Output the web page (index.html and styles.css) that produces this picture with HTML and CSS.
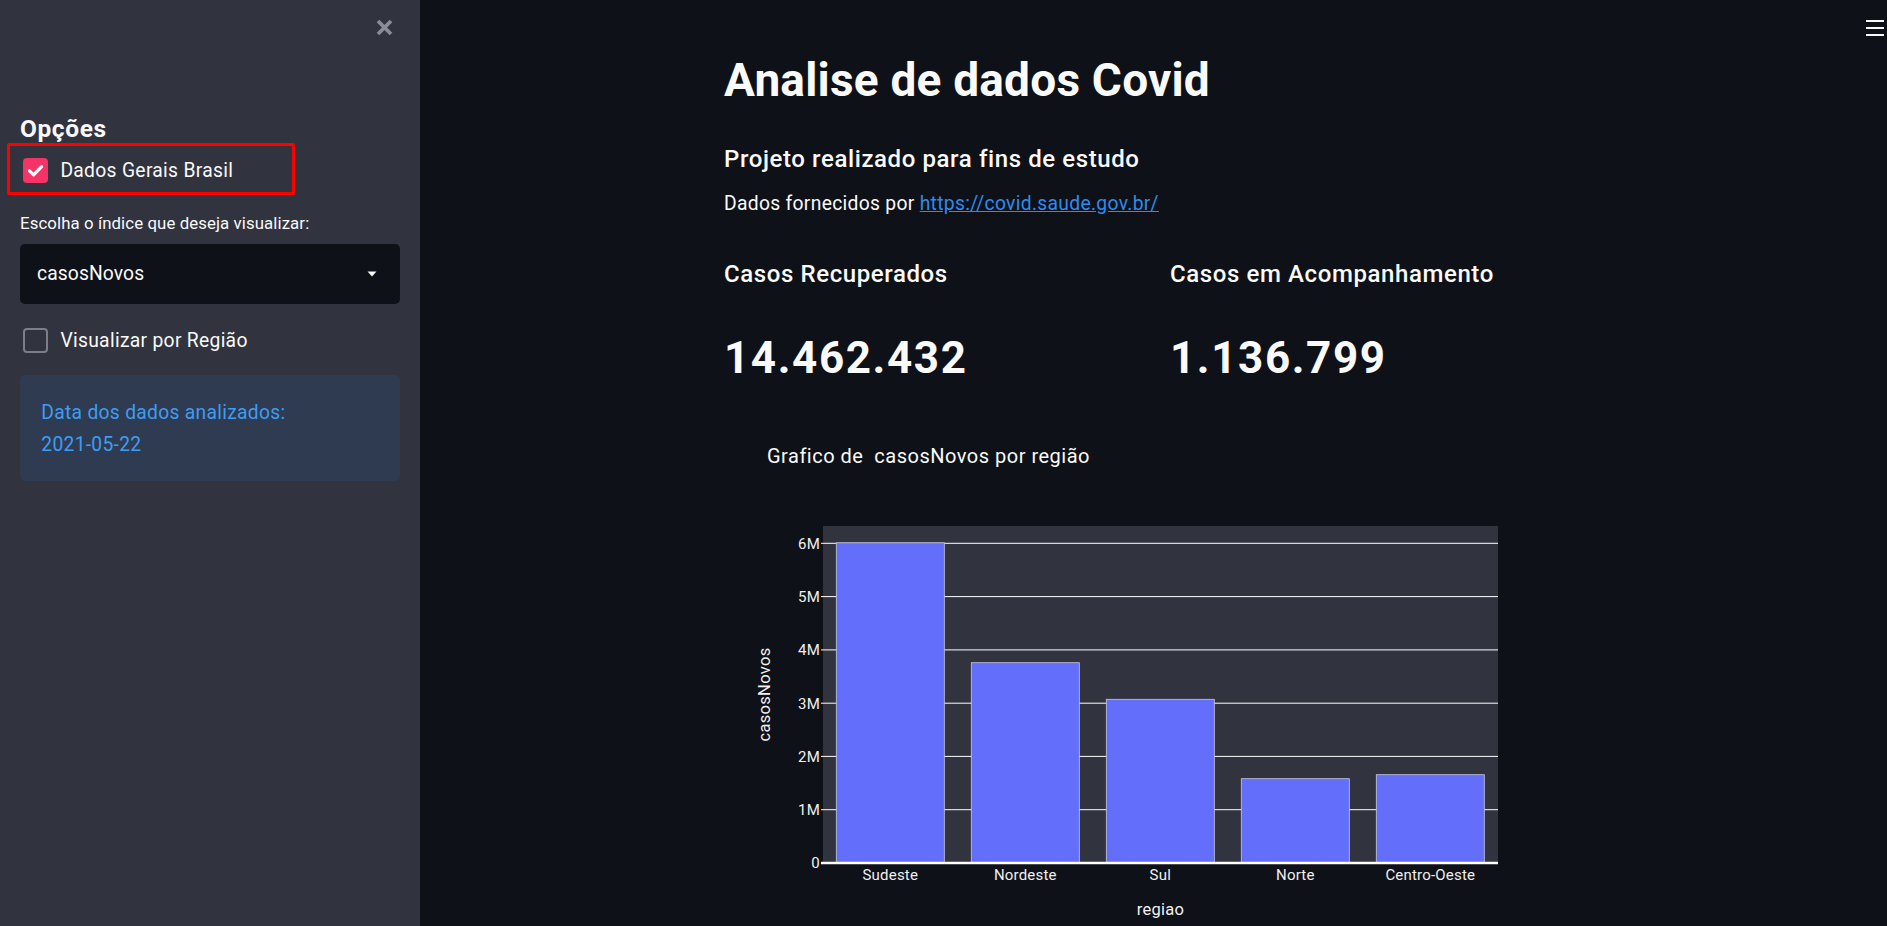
FILE: index.html
```html
<!DOCTYPE html>
<html lang="pt">
<head>
<meta charset="utf-8">
<title>Analise de dados Covid</title>
<link rel="stylesheet" href="styles.css">
</head>
<body>
<div class="app">
  <aside class="sidebar">
    <div class="sidebar-top">
      <button class="close-btn" aria-label="Fechar">
        <svg width="17" height="17" viewBox="0 0 17 17"><path d="M2 2 L15 15 M15 2 L2 15" stroke="#8b8d96" stroke-width="3.8" stroke-linecap="butt"/></svg>
      </button>
    </div>
    <h2 class="side-title">Opções</h2>
    <label class="check-row highlighted">
      <span class="check checked">
        <svg width="25" height="25" viewBox="0 0 25 25"><path d="M6.5 12.8 L10.6 16.8 L18.6 8.6" fill="none" stroke="#fff" stroke-width="3.2" stroke-linecap="round" stroke-linejoin="round"/></svg>
      </span>
      <span class="check-text">Dados Gerais Brasil</span>
    </label>
    <div class="field-label">Escolha o índice que deseja visualizar:</div>
    <div class="select">
      <span class="select-value">casosNovos</span>
      <svg class="caret" width="10" height="6" viewBox="0 0 10 6"><path d="M0.5 0.5 H9.5 L5 5.5 Z" fill="#fafafa"/></svg>
    </div>
    <label class="check-row second">
      <span class="check"></span>
      <span class="check-text">Visualizar por Região</span>
    </label>
    <div class="info">
      <div>Data dos dados analizados:</div>
      <div>2021-05-22</div>
    </div>
  </aside>
  <main class="main">
    <button class="menu-btn" aria-label="Menu">
      <span></span><span></span><span></span>
    </button>
    <div class="content">
      <h1 class="title">Analise de dados Covid</h1>
      <h3 class="subtitle">Projeto realizado para fins de estudo</h3>
      <p class="source">Dados fornecidos por <a href="#">https://covid.saude.gov.br/</a></p>
      <div class="metrics">
        <div class="metric">
          <div class="metric-label">Casos Recuperados</div>
          <div class="metric-value">14.462.432</div>
        </div>
        <div class="metric">
          <div class="metric-label">Casos em Acompanhamento</div>
          <div class="metric-value">1.136.799</div>
        </div>
      </div>
      <div class="chart">
        <svg width="859" height="496" viewBox="0 0 859 496">
          <text class="chart-title" x="43" y="33.3">Grafico de  casosNovos por região</text>
          <rect x="99" y="96" width="675" height="337" fill="#31333f"/>
          <g stroke="#ffffff" stroke-width="1">
            <line x1="97" x2="774" y1="113.3" y2="113.3"/>
            <line x1="97" x2="774" y1="166.6" y2="166.6"/>
            <line x1="97" x2="774" y1="219.9" y2="219.9"/>
            <line x1="97" x2="774" y1="273.2" y2="273.2"/>
            <line x1="97" x2="774" y1="326.4" y2="326.4"/>
            <line x1="97" x2="774" y1="379.7" y2="379.7"/>
          </g>
          <g class="bars" fill="#636efa" stroke="#c8cad6" stroke-width="0.8">
            <rect x="112.3" y="112.8" width="108" height="320.2"/>
            <rect x="247.3" y="232.7" width="108" height="200.3"/>
            <rect x="382.3" y="269.3" width="108" height="163.7"/>
            <rect x="517.3" y="348.7" width="108" height="84.3"/>
            <rect x="652.3" y="344.7" width="108" height="88.3"/>
          </g>
          <line x1="97" x2="774" y1="433" y2="433" stroke="#ffffff" stroke-width="2.5"/>
          <g class="ytick" text-anchor="end">
            <text x="96" y="118.6">6M</text>
            <text x="96" y="171.9">5M</text>
            <text x="96" y="225.2">4M</text>
            <text x="96" y="278.5">3M</text>
            <text x="96" y="331.7">2M</text>
            <text x="96" y="385">1M</text>
            <text x="96" y="438.3">0</text>
          </g>
          <g class="xtick" text-anchor="middle">
            <text x="166.3" y="450">Sudeste</text>
            <text x="301.3" y="450">Nordeste</text>
            <text x="436.3" y="450">Sul</text>
            <text x="571.3" y="450">Norte</text>
            <text x="706.3" y="450">Centro-Oeste</text>
          </g>
          <text class="axis-title" x="436.5" y="485" text-anchor="middle">regiao</text>
          <text class="axis-title" transform="translate(46 264.5) rotate(-90)" text-anchor="middle">casosNovos</text>
        </svg>
      </div>
    </div>
  </main>
</div>
</body>
</html>
```

FILE: styles.css
```css
*, *::before, *::after { box-sizing: border-box; }

html, body {
  margin: 0;
  padding: 0;
  height: 100%;
}

body {
  font-family: Roboto, "Noto Sans", sans-serif;
  color: #fafafa;
  background: #0e1117;
}

.app {
  display: flex;
  height: 926px;
  overflow: hidden;
}

/* ---------- Sidebar ---------- */
.sidebar {
  width: 420px;
  flex: 0 0 420px;
  background: #31333f;
  padding: 0 20px;
  display: flex;
  flex-direction: column;
}

.sidebar-top {
  height: 114px;
  margin-right: -20px;
  padding: 19px 27px 0 0;
  display: flex;
  justify-content: flex-end;
  align-items: flex-start;
}

.close-btn {
  border: 0;
  padding: 0;
  margin: 0;
  background: none;
  width: 17px;
  height: 17px;
  display: block;
}
.close-btn svg { display: block; }

.side-title {
  margin: 0;
  font-size: 24.5px;
  font-weight: 700;
  line-height: 30px;
  height: 30px;
  letter-spacing: 0.6px;
}

.check-row {
  display: flex;
  align-items: center;
  height: 25px;
  margin-top: 13.7px;
  padding-left: 2.7px;
  position: relative;
}

.check-row.highlighted::after {
  content: "";
  position: absolute;
  left: -13.3px;
  top: -14.4px;
  width: 288px;
  height: 51.7px;
  border: 3px solid #ff0000;
  border-radius: 2px;
}

.check {
  width: 25px;
  height: 25px;
  flex: 0 0 25px;
  border-radius: 4px;
  border: 2px solid #7c7e88;
}
.check.checked {
  background: #f63366;
  border: 0;
}
.check svg { display: block; }

.check-text {
  margin-left: 12.7px;
  font-size: 19.3px;
  line-height: 25px;
  letter-spacing: 0.3px;
}

.field-label {
  margin-top: 30.8px;
  font-size: 16.8px;
  line-height: 20px;
  height: 20px;
  letter-spacing: 0.1px;
}

.select {
  margin-top: 10.5px;
  height: 60px;
  background: #0e1117;
  border-radius: 5px;
  display: flex;
  align-items: center;
  justify-content: space-between;
  padding: 0 23px 0 17px;
}
.select-value {
  font-size: 19.3px;
  letter-spacing: 0.1px;
}

.check-row.second {
  margin-top: 23.7px;
}

.info {
  margin-top: 22.3px;
  height: 105.7px;
  background: #2f3b51;
  border-radius: 5px;
  padding: 22.5px 21.3px 0;
  color: #3d9df3;
  font-size: 19.3px;
  line-height: 31.7px;
  letter-spacing: 0.28px;
}

/* ---------- Main ---------- */
.main {
  flex: 1;
  position: relative;
  background: #0e1117;
}

.menu-btn {
  position: absolute;
  top: 20px;
  right: 3px;
  width: 18px;
  height: 16px;
  padding: 0;
  border: 0;
  background: none;
  display: flex;
  flex-direction: column;
  justify-content: space-between;
}
.menu-btn span {
  display: block;
  height: 2.2px;
  background: #fafafa;
}

.content {
  width: 859px;
  margin: 0 auto;
  padding-top: 52px;
}

.title {
  margin: 0;
  font-size: 46px;
  font-weight: 700;
  line-height: 56px;
  height: 56px;
  letter-spacing: 0.2px;
}

.subtitle {
  margin: 35.5px 0 0;
  font-size: 24px;
  font-weight: 500;
  line-height: 30px;
  height: 30px;
  letter-spacing: 0.6px;
}

.source {
  margin: 15.4px 0 0;
  font-size: 19.3px;
  line-height: 29px;
  height: 29px;
  letter-spacing: 0.3px;
}
.source a {
  color: #2b8cf0;
  text-decoration: underline;
}

.metrics {
  margin-top: 42.2px;
  display: grid;
  grid-template-columns: 1fr 1fr;
  column-gap: 33px;
}

.metric-label {
  font-size: 24px;
  font-weight: 500;
  line-height: 28px;
  height: 28px;
  letter-spacing: 0.6px;
}

.metric-value {
  margin-top: 44.15px;
  font-size: 44px;
  font-weight: 700;
  line-height: 52px;
  height: 52px;
  letter-spacing: 1.6px;
}

.chart {
  margin-top: 45.4px;
}
.chart svg { display: block; overflow: visible; }

.chart-title {
  font-family: Roboto, "Noto Sans", sans-serif;
  font-size: 20px;
  letter-spacing: 0.5px;
  fill: #fafafa;
  white-space: pre;
}

.ytick text, .xtick text {
  font-family: Roboto, "Noto Sans", sans-serif;
  font-size: 15px;
  letter-spacing: 0.2px;
  fill: #f0f0f0;
}

.axis-title {
  font-family: Roboto, "Noto Sans", sans-serif;
  font-size: 16.5px;
  letter-spacing: 0.3px;
  fill: #f0f0f0;
}
```
